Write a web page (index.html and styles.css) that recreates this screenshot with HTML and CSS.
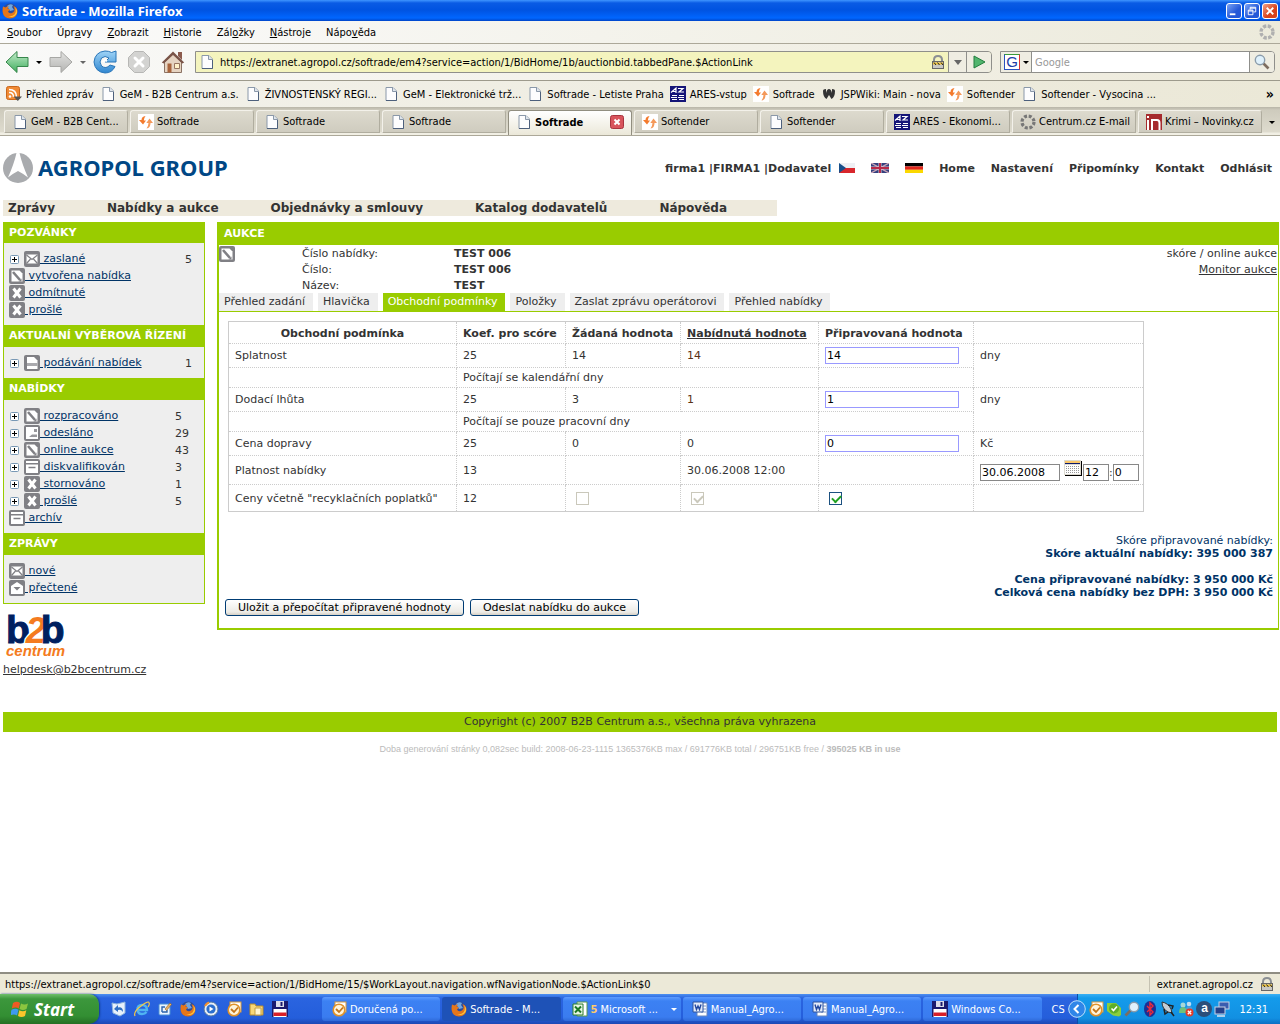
FILE: index.html
```html
<!DOCTYPE html>
<html lang="cs">
<head>
<meta charset="utf-8">
<title>Softrade - Mozilla Firefox</title>
<link rel="stylesheet" href="styles.css">
</head>
<body>
<svg class="sprite" aria-hidden="true">
  <defs>
    <linearGradient id="gGreen" x1="0" y1="0" x2="0" y2="1"><stop offset="0" stop-color="#c5eccb"/><stop offset="1" stop-color="#3fae5e"/></linearGradient>
    <linearGradient id="gGray" x1="0" y1="0" x2="0" y2="1"><stop offset="0" stop-color="#e2e2e0"/><stop offset="1" stop-color="#b4b4b2"/></linearGradient>
    <linearGradient id="gBlue" x1="0" y1="0" x2="0" y2="1"><stop offset="0" stop-color="#9fd4f7"/><stop offset="1" stop-color="#2f86d0"/></linearGradient>
  </defs>
  <symbol id="firefox" viewBox="0 0 16 16"><circle cx="8" cy="8" r="7.4" fill="#2c4c9c"/><path d="M5 3q3-3 6-1l-1 2 2 3-4 1z" fill="#6fa6e0"/><path d="M1 3.500L3.600 4.500Q5 3 7 3.500L5.500 5.500 8 6.500 6 8.500Q7 11 10 10 13 8.500 12.500 5.500L11.500 3Q15.700 4.500 15.500 9 14.600 15 8 15.600 1.500 15 .6 9 .3 6 1 3.500z" fill="#e5761a"/><path d="M13 4q2 4-.5 7.500Q10 14 6 13q6 3 9-3 .8-3-2-6z" fill="#fbc33c"/></symbol>
  <symbol id="page" viewBox="0 0 16 16"><path d="M3 1.500h7L13.500 5v9.500H3z" fill="#fdfdfe" stroke="#8a98a9"/><path d="M9.500 1.500V5.500h4" fill="#dfe5ec" stroke="#8a98a9"/><path d="M3 14.500h10.500V6" fill="none" stroke="#4d607c"/></symbol>
  <symbol id="swirl" viewBox="0 0 16 16"><path fill="#fff" d="M0 0h16v16H0z"/><path d="M7.500 2Q3.500 2.500 3.500 6H1l4 4.500L8 6.500H5.800Q6 4 7.500 2z" fill="#f47a2c"/><path d="M8.500 14.500q4-.5 4-5.500H15L11.500 4.500 8.300 9H10.500Q10.300 12.500 8.500 14.500z" fill="#f4995a"/></symbol>
  <symbol id="ares" viewBox="0 0 16 16"><path fill="#151578" d="M0 0h16v16H0z"/><path d="M1 6.500L6 2v5M2 5.500h4M8 2.500h5L9 6h5M2 9.500h5M2 13.500h5M9 9.500h5M9 13.500h5M1 11.500h6M8 11.500h6" fill="none" stroke="#fff" stroke-width="1.200"/></symbol>
  <symbol id="rss" viewBox="0 0 16 16"><rect x=".5" y=".5" width="13" height="13" rx="2" fill="#f08a34" stroke="#c9671b"/><circle cx="4" cy="10.500" r="1.300" fill="#fff"/><path d="M3 6.500q4.500 0 4.500 4.500M3 3.500q7.500 0 7.500 7.500" fill="none" stroke="#fff" stroke-width="1.500"/><path d="M7.500 10.500h8.500l-4.200 4.500z" fill="#555"/></symbol>
  <symbol id="wiki" viewBox="0 0 16 16"><path d="M2 5q0-2 3-2v4q1-4 3-4t3 4V3q3 0 3 2 0 6-3.500 8L8 9l-2.500 4Q2 11 2 5z" fill="#333"/></symbol>
  <symbol id="throb" viewBox="0 0 16 16"><circle cx="8" cy="8" r="6" fill="none" stroke="#b0b0b0" stroke-width="3.400" stroke-dasharray="3.300 1.410"/></symbol>
  <symbol id="throb2" viewBox="0 0 16 16"><circle cx="8" cy="8" r="6" fill="none" stroke="#777" stroke-width="3.200" stroke-dasharray="3 1.710"/></symbol>
  <symbol id="novinky" viewBox="0 0 16 16"><path fill="#a62b2e" d="M0 0h16v16H0z"/><path d="M2 4V2M2 16V6M6 16V6h5q2.500 0 2.500 3v7" fill="none" stroke="#fff" stroke-width="2"/></symbol>
  <symbol id="back" viewBox="0 0 24 24"><path d="M1 12L12 1.500V7.500H23V16.500H12V22.500z" fill="url(#gGreen)" stroke="#36864b"/></symbol>
  <symbol id="fwd" viewBox="0 0 24 24"><path d="M23 12L12 1.500V7.500H1V16.500H12V22.500z" fill="url(#gGray)" stroke="#a7a7a4"/></symbol>
  <symbol id="reload" viewBox="0 0 24 24"><path d="M18.500 2.500L23 1v11H12l4-4Q12 5 8.500 8 5.500 12 8.500 16q4.500 3.500 8.500-1l5 1.500Q19 23 12 23 2 22 1 12 2 2 12 1q4 0 6.500 1.500z" fill="url(#gBlue)" stroke="#2774b8"/><path d="M14 11q-3-1.500-4 1" fill="none" stroke="#fff" stroke-width="2"/></symbol>
  <symbol id="stop" viewBox="0 0 24 24"><path d="M7.500 1.500h9l6 6v9l-6 6h-9l-6-6v-9z" fill="#d3d3d1" stroke="#b7b7b5"/><path d="M8 8l8 8M16 8l-8 8" stroke="#fff" stroke-width="3" stroke-linecap="round"/></symbol>
  <symbol id="home" viewBox="0 0 24 24"><path d="M17 2h4v8l-4-4z" fill="#8b5a4c"/><path d="M3.500 12L12 4l8.500 8v10.500h-17z" fill="#e6d4c2" stroke="#8a7264"/><path d="M.8 12.500L12 1.500l11.200 11-2 1L12 5 2.800 13.500z" fill="#795347"/><path d="M6.500 13.500h4v9h-4z" fill="#a8643c"/><path d="M13.500 13.500h5v5h-5z" fill="#fff1c9" stroke="#987560"/></symbol>
  <symbol id="lock" viewBox="0 0 16 16"><path d="M4 9V6q0-4 4-4t4 4v3" fill="none" stroke="#8b8f94" stroke-width="2"/><rect x="2.500" y="7.500" width="11" height="7" fill="#c8c8c4" stroke="#666"/><path d="M3 9.500h10" stroke="#f2c331" stroke-width="2"/><path d="M4 8.500l2 2.500M7.500 8.500l2 2.500M11 8.500l2 2.500" stroke="#222"/></symbol>
  <symbol id="go" viewBox="0 0 16 16"><path d="M3 2l11 6L3 14z" fill="#52b56e" stroke="#237d3e"/></symbol>
  <symbol id="mag" viewBox="0 0 16 16"><path d="M9.500 9.500l5 5" stroke="#7d6d60" stroke-width="2.600"/><circle cx="6" cy="6" r="4.700" fill="#dff1fc" stroke="#8a9cab" stroke-width="1.400"/></symbol>
  <symbol id="pen" viewBox="0 0 16 16"><rect width="16" height="16" rx="2" fill="#808085"/><path d="M2.500 2.500h8l3 3v8h-11z" fill="#fff"/><path d="M4 4L11 12" stroke="#808085" stroke-width="2.600"/><path d="M12.500 10.500v3h-3z" fill="#808085"/></symbol>
  <symbol id="mail" viewBox="0 0 16 16"><rect width="16" height="16" rx="2" fill="#808085"/><rect x="2.500" y="3.500" width="11" height="9" fill="#fff"/><path d="M2.500 4l5.500 4.500L13.500 4M2.500 12.500l4-4.500M13.500 12.500l-4-4.500" fill="none" stroke="#808085" stroke-width="1.200"/></symbol>
  <symbol id="cross" viewBox="0 0 16 16"><rect width="16" height="16" rx="2" fill="#808085"/><path d="M4.500 3.500l7 9M11.500 3.500l-7 9" stroke="#fff" stroke-width="3"/></symbol>
  <symbol id="doc" viewBox="0 0 16 16"><rect width="16" height="16" rx="2" fill="#808085"/><path d="M3 2h7l3.500 3.500V14H3z" fill="#fff"/><path d="M3 8h10.500v3H3z" fill="#aaaaae"/></symbol>
  <symbol id="sent" viewBox="0 0 16 16"><rect width="16" height="16" rx="2" fill="#808085"/><path d="M2 2h12v12H2z" fill="#fff"/><path d="M10 4h3v3h-3zM5 12l3-2.500h5V12z" fill="#98989c"/></symbol>
  <symbol id="box" viewBox="0 0 16 16"><rect width="16" height="16" rx="2" fill="#808085"/><path d="M2 2h12v2H2zM2 5.500h12V14H2z" fill="#fff"/><path d="M4.500 8.500h7" stroke="#808085" stroke-width="1.500"/></symbol>
  <symbol id="open" viewBox="0 0 16 16"><rect width="16" height="16" rx="2" fill="#808085"/><path d="M2 6l6-4 6 4v8H2z" fill="#fff"/><path d="M4.500 7h7L8 10.500z" fill="#808085"/></symbol>
  <symbol id="plus" viewBox="0 0 9 9"><rect x=".5" y=".5" width="8" height="8" rx="1" fill="#fff" stroke="#7898b5"/><path d="M2 4.500h5M4.500 2v5" stroke="#000"/></symbol>
  <symbol id="outlook" viewBox="0 0 16 16"><rect x="4" y="1" width="11" height="10" fill="#fff" stroke="#d99b3c"/><circle cx="8" cy="9" r="5.800" fill="#fff4da" stroke="#e0922a" stroke-width="1.600"/><path d="M5 8l3 3 4-4.500" fill="none" stroke="#c4761a" stroke-width="1.800"/></symbol>
  <symbol id="ie" viewBox="0 0 16 16"><path d="M3.500 9h9.500Q13 4 8 4T3.500 9q.5 4 4.500 4 3 0 4.500-2" fill="none" stroke="#4fb4f2" stroke-width="2.400"/><path d="M1 15Q-1 11 7 5T15 2q1 1-1 4" fill="none" stroke="#f5c945" stroke-width="1.200"/></symbol>
  <symbol id="sync" viewBox="0 0 16 16"><path d="M1 2l5 1 8-2v11l-5 3-7-3z" fill="#e7f1fb" stroke="#8fb5dc"/><path d="M3 8l4-4v2.500q5-1 5 4.500-2-3-5-2V11z" fill="#2f6fc4"/></symbol>
  <symbol id="desk" viewBox="0 0 16 16"><rect x="2" y="3" width="11" height="11" rx="1" fill="#e9f4ff" stroke="#4a8fd4"/><path d="M5 11V6h3M5 11h5V9" fill="none" stroke="#2a62ac" stroke-width="1.400"/><path d="M8 8l5-6 1.500 1.500-5 6z" fill="#e7b36c" stroke="#8b5a20" stroke-width=".6"/></symbol>
  <symbol id="wmp" viewBox="0 0 16 16"><circle cx="8" cy="8" r="7" fill="#e8eef6" stroke="#54779f"/><circle cx="8" cy="8" r="4.600" fill="#2c6fce"/><path d="M6.500 5.500v5l4-2.500z" fill="#fff"/><path d="M2 5a7 7 0 0 1 4-3.500" stroke="#ef9130" stroke-width="2" fill="none"/></symbol>
  <symbol id="folder" viewBox="0 0 16 16"><path d="M1 3h5l1 2h7v9H1z" fill="#f8d878" stroke="#b98c2a"/><path d="M6 7h6v7H6z" fill="#fff6d2" stroke="#c39f48"/></symbol>
  <symbol id="floppy" viewBox="0 0 16 16"><path d="M0 0h16v16H0z" fill="#1a1a6e"/><path d="M4 0h8v6H4z" fill="#dcdce8"/><path d="M8.500 1h2v4h-2z" fill="#1a1a6e"/><path d="M1.500 8h13v8h-13z" fill="#fff"/><path d="M1.500 11.500h13v3.500h-13z" fill="#d8202a"/></symbol>
  <symbol id="excel" viewBox="0 0 16 16"><path d="M5 1h10v14H5z" fill="#fff" stroke="#5b9a4c"/><path d="M1 3h10v11H1z" fill="#e9f6e5" stroke="#2c7d2c"/><path d="M3 5.500l6 6M9 5.500l-6 6" stroke="#1f7a25" stroke-width="2"/></symbol>
  <symbol id="word" viewBox="0 0 16 16"><path d="M5 2h10v13H5z" fill="#fff" stroke="#6685bd"/><path d="M9 5h5M9 8h5M9 11h5" stroke="#7d97c8"/><path d="M1 1h10v10H1z" fill="#e3ebf9" stroke="#2d539e"/><path d="M3 3.500l1.500 5L6 5l1.500 3.500L9 3.500" fill="none" stroke="#2449a0" stroke-width="1.400"/></symbol>
  <symbol id="winflag" viewBox="0 0 18 18"><path d="M2 3q4-2.500 7 0L7.800 8.500q-3-2-7 0z" fill="#ee5a24"/><path d="M10 3.500q3.500 2 7 0L15.500 9q-3.500 2-7 0z" fill="#8cc63f"/><path d="M.5 9.800q4-2 7 0L6 15.500q-3-2-7 0z" fill="#3f9af0"/><path d="M8.300 10.300q3.500 2 7 0L14 16q-3.500 2-7 0z" fill="#fdc52b"/></symbol>
  <symbol id="skype" viewBox="0 0 16 16"><path d="M1 2h9l5 5v7l-2 1.500-6-1L1 10z" fill="#8bcf3c"/><circle cx="8" cy="7.500" r="5" fill="#5eae2a"/><path d="M5.500 7.500l2 2 3.500-4" fill="none" stroke="#fff" stroke-width="1.600"/></symbol>
  <symbol id="bt" viewBox="0 0 16 16"><ellipse cx="8" cy="8" rx="6" ry="8" fill="#1b2f94"/><path d="M5 5l6 6-3 3V2l3 3-6 6" fill="none" stroke="#f02a38" stroke-width="1.400"/></symbol>
  <symbol id="rocket" viewBox="0 0 16 16"><path d="M2 1q6 1 9 7l1 4-4-1Q2 8 2 1z" fill="#c6cdd4" stroke="#333"/><path d="M4 8l1 5 3-2M8 4l5 1-1 3M11 11l3 4" fill="none" stroke="#222" stroke-width="1.500"/></symbol>
  <symbol id="users" viewBox="0 0 16 16"><circle cx="5" cy="4" r="2.500" fill="#a7d7d8"/><path d="M1 12q0-6 4-6t4 6z" fill="#6fc27c"/><circle cx="11" cy="3" r="2.300" fill="#bfdcf3"/><path d="M8 9q0-4 3-4t3.500 4z" fill="#4e9fd8"/><circle cx="11.500" cy="11.500" r="4" fill="#e23b28"/><path d="M9.800 9.800l3.400 3.400M13.200 9.800l-3.400 3.400" stroke="#fff" stroke-width="1.300"/></symbol>
  <symbol id="net" viewBox="0 0 16 16"><rect x="5" y="1" width="10" height="7" fill="#3a5db0" stroke="#c9d2e4"/><rect x="1" y="6" width="10" height="7" fill="#24408a" stroke="#c9d2e4"/><path d="M3 15h8" stroke="#dfe4ef" stroke-width="1.500"/></symbol>
</svg>

<div class="window">
  <header class="titlebar">
    <svg class="i16"><use href="#firefox"/></svg>
    <h1 class="titlebar-text">Softrade - Mozilla Firefox</h1>
    <button class="winbtn" aria-label="Minimalizovat"><svg viewBox="0 0 15 15"><path d="M3 10h6v2H3z" fill="#fff"/></svg></button>
    <button class="winbtn" aria-label="Obnovit"><svg viewBox="0 0 15 15"><path d="M5.500 6V3.500h6v5H9M5.500 4.500h6M3.500 6.500h5v5h-5zM3.500 7.500h5" fill="none" stroke="#fff"/></svg></button>
    <button class="winbtn winbtn-close" aria-label="Zavřít"><svg viewBox="0 0 15 15"><path d="M4 4l7 7M11 4l-7 7" stroke="#fff" stroke-width="2"/></svg></button>
  </header>

  <nav class="menubar">
    <button><u>S</u>oubor</button><button>Úpr<u>a</u>vy</button><button><u>Z</u>obrazit</button><button><u>H</u>istorie</button><button>Zál<u>o</u>žky</button><button><u>N</u>ástroje</button><button>Nápo<u>v</u>ěda</button>
    <svg class="i16 push"><use href="#throb"/></svg>
  </nav>

  <div class="navbar">
    <button class="tool" aria-label="Zpět"><svg class="i24"><use href="#back"/></svg></button>
    <button class="caret-btn" aria-label="Historie zpět"><span class="caret"></span></button>
    <button class="tool" aria-label="Vpřed"><svg class="i24"><use href="#fwd"/></svg></button>
    <button class="caret-btn" aria-label="Historie vpřed"><span class="caret caret-dim"></span></button>
    <button class="tool" aria-label="Obnovit stránku"><svg class="i24"><use href="#reload"/></svg></button>
    <button class="tool" aria-label="Zastavit"><svg class="i24"><use href="#stop"/></svg></button>
    <button class="tool" aria-label="Domů"><svg class="i24"><use href="#home"/></svg></button>
    <div class="urlbar">
      <svg class="i16"><use href="#page"/></svg>
      <input type="text" aria-label="Adresa" value="https://extranet.agropol.cz/softrade/em4?service=action/1/BidHome/1b/auctionbid.tabbedPane.$ActionLink">
      <svg class="i16"><use href="#lock"/></svg>
      <button class="bar-btn bar-drop" aria-label="Seznam adres"><span class="caret caret-dim caret-big"></span></button>
      <button class="bar-btn" aria-label="Přejít"><svg class="i16"><use href="#go"/></svg></button>
    </div>
    <div class="searchbar">
      <button class="engine" aria-label="Vyhledávač Google"><span class="g-mark">G</span><span class="caret"></span></button>
      <input type="text" aria-label="Hledat" placeholder="Google">
      <button class="bar-btn" aria-label="Hledat"><svg class="i16"><use href="#mag"/></svg></button>
    </div>
  </div>

  <nav class="bookmarks">
    <a href="#"><svg class="i16"><use href="#rss"/></svg>Přehled zpráv</a>
    <a href="#"><svg class="i16"><use href="#page"/></svg>GeM - B2B Centrum a.s.</a>
    <a href="#"><svg class="i16"><use href="#page"/></svg>ŽIVNOSTENSKÝ REGI...</a>
    <a href="#"><svg class="i16"><use href="#page"/></svg>GeM - Elektronické trž...</a>
    <a href="#"><svg class="i16"><use href="#page"/></svg>Softrade - Letiste Praha</a>
    <a href="#"><svg class="i16"><use href="#ares"/></svg>ARES-vstup</a>
    <a href="#"><svg class="i16"><use href="#swirl"/></svg>Softrade</a>
    <a href="#"><svg class="i16"><use href="#wiki"/></svg>JSPWiki: Main - nova</a>
    <a href="#"><svg class="i16"><use href="#swirl"/></svg>Softender</a>
    <a href="#"><svg class="i16"><use href="#page"/></svg>Softender - Vysocina ...</a>
    <button class="more push" aria-label="Další záložky">»</button>
  </nav>

  <div class="tabstrip">
    <button class="tab"><svg class="i16"><use href="#page"/></svg>GeM - B2B Cent...</button>
    <button class="tab"><svg class="i16"><use href="#swirl"/></svg>Softrade</button>
    <button class="tab"><svg class="i16"><use href="#page"/></svg>Softrade</button>
    <button class="tab"><svg class="i16"><use href="#page"/></svg>Softrade</button>
    <button class="tab tab-active"><svg class="i16"><use href="#page"/></svg>Softrade<svg class="tab-close" viewBox="0 0 14 14"><rect x=".5" y=".5" width="13" height="13" rx="2" fill="#d8545c" stroke="#a9343f"/><path d="M4.500 4.500l5 5M9.500 4.500l-5 5" stroke="#fff" stroke-width="2"/></svg></button>
    <button class="tab"><svg class="i16"><use href="#swirl"/></svg>Softender</button>
    <button class="tab"><svg class="i16"><use href="#page"/></svg>Softender</button>
    <button class="tab"><svg class="i16"><use href="#ares"/></svg>ARES - Ekonomi...</button>
    <button class="tab"><svg class="i16"><use href="#throb2"/></svg>Centrum.cz E-mail</button>
    <button class="tab"><svg class="i16"><use href="#novinky"/></svg>Krimi – Novinky.cz</button>
    <button class="tab-list" aria-label="Seznam panelů"><span class="caret"></span></button>
  </div>

  <main class="page">
    <div class="page-head">
      <a class="brand" href="#">
        <svg class="brand-mark" viewBox="0 0 30 30"><circle cx="15" cy="15" r="15" fill="#a9abae"/><path d="M13.500 0Q11 11 5 24.500 10 20.500 15 18 20 20.500 25 24.500 19 11 16.500 0z" fill="#fff"/></svg>
        <span class="brand-name">AGROPOL GROUP</span>
      </a>
      <nav class="user-nav">
        <span class="who">firma1 |FIRMA1 |Dodavatel</span>
        <a href="#" aria-label="Čeština"><svg class="flag-cz" viewBox="0 0 16 10"><path fill="#eef0f4" d="M0 0h16v5H0z"/><path fill="#d8262c" d="M0 5h16v5H0z"/><path fill="#174f8a" d="M0 0l7 5-7 5z"/></svg></a>
        <a href="#" aria-label="English"><svg class="flag" viewBox="0 0 18 10"><path fill="#33407f" d="M0 0h18v10H0z"/><path d="M0 0l18 10M18 0L0 10" stroke="#c9a3b5" stroke-width="1.400"/><path d="M9 0v10M0 5h18" stroke="#d9c8d4" stroke-width="3"/><path d="M9 0v10M0 5h18" stroke="#b82a48" stroke-width="2"/></svg></a>
        <a href="#" aria-label="Deutsch"><svg class="flag" viewBox="0 0 18 10"><path d="M0 0h18v3.400H0z"/><path fill="#e0261c" d="M0 3.400h18v3.400H0z"/><path fill="#fbd800" d="M0 6.800h18V10H0z"/></svg></a>
        <a href="#">Home</a><a href="#">Nastavení</a><a href="#">Připomínky</a><a href="#">Kontakt</a><a href="#">Odhlásit</a>
      </nav>
    </div>

    <nav class="site-menu">
      <a href="#">Zprávy</a><a href="#">Nabídky a aukce</a><a href="#">Objednávky a smlouvy</a><a href="#">Katalog dodavatelů</a><a href="#">Nápověda</a>
    </nav>

    <div class="columns">
      <aside class="side">
        <div class="side-box">
          <h2>POZVÁNKY</h2>
          <ul>
            <li><svg class="plus"><use href="#plus"/></svg><a href="#"><svg class="i16"><use href="#mail"/></svg>&nbsp;zaslané</a><span class="count">5</span></li>
            <li><a href="#"><svg class="i16"><use href="#pen"/></svg>&nbsp;vytvořena nabídka</a></li>
            <li><a href="#"><svg class="i16"><use href="#cross"/></svg>&nbsp;odmítnuté</a></li>
            <li><a href="#"><svg class="i16"><use href="#cross"/></svg>&nbsp;prošlé</a></li>
          </ul>
          <h2>AKTUALNÍ VÝBĚROVÁ ŘÍZENÍ</h2>
          <ul>
            <li><svg class="plus"><use href="#plus"/></svg><a href="#"><svg class="i16"><use href="#doc"/></svg>&nbsp;podávání nabídek</a><span class="count">1</span></li>
          </ul>
          <h2>NABÍDKY</h2>
          <ul class="wide-counts">
            <li><svg class="plus"><use href="#plus"/></svg><a href="#"><svg class="i16"><use href="#pen"/></svg>&nbsp;rozpracováno</a><span class="count">5</span></li>
            <li><svg class="plus"><use href="#plus"/></svg><a href="#"><svg class="i16"><use href="#sent"/></svg>&nbsp;odesláno</a><span class="count">29</span></li>
            <li><svg class="plus"><use href="#plus"/></svg><a href="#"><svg class="i16"><use href="#pen"/></svg>&nbsp;online aukce</a><span class="count">43</span></li>
            <li><svg class="plus"><use href="#plus"/></svg><a href="#"><svg class="i16"><use href="#box"/></svg>&nbsp;diskvalifikován</a><span class="count">3</span></li>
            <li><svg class="plus"><use href="#plus"/></svg><a href="#"><svg class="i16"><use href="#cross"/></svg>&nbsp;stornováno</a><span class="count">1</span></li>
            <li><svg class="plus"><use href="#plus"/></svg><a href="#"><svg class="i16"><use href="#cross"/></svg>&nbsp;prošlé</a><span class="count">5</span></li>
            <li><a href="#"><svg class="i16"><use href="#box"/></svg>&nbsp;archív</a></li>
          </ul>
          <h2>ZPRÁVY</h2>
          <ul>
            <li><a href="#"><svg class="i16"><use href="#mail"/></svg>&nbsp;nové</a></li>
            <li><a href="#"><svg class="i16"><use href="#open"/></svg>&nbsp;přečtené</a></li>
          </ul>
        </div>
        <svg class="b2b" viewBox="0 0 62 48" role="img" aria-label="b2b centrum">
          <text x="1" y="32" class="b2b-b">b<tspan class="b2b-2" dx="-4">2</tspan><tspan dx="-5">b</tspan></text>
          <text x="1" y="45" class="b2b-c">centrum</text>
        </svg>
        <a class="helpdesk" href="#">helpdesk@b2bcentrum.cz</a>
      </aside>

      <section class="auction">
        <h2>AUKCE</h2>
        <div class="info">
          <svg class="i16"><use href="#pen"/></svg>
          <dl>
            <dt>Číslo nabídky:</dt><dd>TEST 006</dd>
            <dt>Číslo:</dt><dd>TEST 006</dd>
            <dt>Název:</dt><dd>TEST</dd>
          </dl>
          <div class="info-right"><span>skóre / online aukce</span><a href="#">Monitor aukce</a></div>
        </div>
        <nav class="subtabs">
          <a href="#">Přehled zadání</a><a href="#">Hlavička</a><a href="#" class="on">Obchodní podmínky</a><a href="#">Položky</a><a href="#">Zaslat zprávu operátorovi</a><a href="#">Přehled nabídky</a>
        </nav>
        <form class="panel">
          <table class="terms">
            <colgroup><col class="c-name"><col class="c-koef"><col class="c-want"><col class="c-offer"><col class="c-prep"><col class="c-unit"></colgroup>
            <thead>
              <tr><th>Obchodní podmínka</th><th>Koef. pro scóre</th><th>Žádaná hodnota</th><th><a href="#">Nabídnutá hodnota</a></th><th>Připravovaná hodnota</th><th></th></tr>
            </thead>
            <tbody>
              <tr class="r-input"><td><label for="splatnost">Splatnost</label></td><td>25</td><td>14</td><td class="own">14</td><td class="field"><input id="splatnost" type="text" value="14"></td><td rowspan="2" class="unit">dny</td></tr>
              <tr class="r-note"><td></td><td colspan="3">Počítají se kalendářní dny</td><td></td></tr>
              <tr class="r-input"><td><label for="lhuta">Dodací lhůta</label></td><td>25</td><td>3</td><td class="own">1</td><td class="field"><input id="lhuta" type="text" value="1"></td><td rowspan="2" class="unit">dny</td></tr>
              <tr class="r-note"><td></td><td colspan="3">Počítají se pouze pracovní dny</td><td></td></tr>
              <tr class="r-input"><td><label for="doprava">Cena dopravy</label></td><td>25</td><td>0</td><td>0</td><td class="field"><input id="doprava" type="text" value="0"></td><td class="unit">Kč</td></tr>
              <tr class="r-date"><td><label for="platnost">Platnost nabídky</label></td><td>13</td><td></td><td>30.06.2008 12:00</td><td></td>
                <td><div class="date-row"><input id="platnost" class="date" type="text" value="30.06.2008"><button type="button" class="cal" aria-label="Kalendář"><svg viewBox="0 0 18 16"><path fill="#000" d="M1 1h17v15H1z"/><path fill="#dddad0" d="M0 0h17v15H0z"/><path fill="#fbc86a" d="M1 1h15v2H1z"/><path fill="#0a1a6e" d="M1 3h15v1H1z"/><path fill="#fff" d="M1 5h15v9H1z"/><path d="M2 6.500h13M2 8.500h13M2 10.500h13M2 12.500h13" stroke="#999" stroke-dasharray="1 1"/></svg></button><input class="num" type="text" aria-label="Hodina" value="12">:<input class="num" type="text" aria-label="Minuta" value="0"></div></td></tr>
              <tr class="r-check"><td><label for="poplatky">Ceny včetně "recyklačních poplatků"</label></td><td>12</td><td><input type="checkbox" aria-label="Žádaná hodnota" disabled></td><td><input type="checkbox" aria-label="Nabídnutá hodnota" checked disabled></td><td><input id="poplatky" type="checkbox" checked></td><td></td></tr>
            </tbody>
          </table>
          <div class="summary">
            <p>Skóre připravované nabídky:</p>
            <p><b>Skóre aktuální nabídky: 395 000 387</b></p>
            <p>&nbsp;</p>
            <p><b>Cena připravované nabídky: 3 950 000 Kč</b></p>
            <p><b>Celková cena nabídky bez DPH: 3 950 000 Kč</b></p>
          </div>
          <div class="actions">
            <button type="button">Uložit a přepočítat připravené hodnoty</button>
            <button type="button">Odeslat nabídku do aukce</button>
          </div>
        </form>
      </section>
    </div>

    <footer class="site-foot">
      <p class="copyright">Copyright (c) 2007 B2B Centrum a.s., všechna práva vyhrazena</p>
      <p class="gen">Doba generování stránky 0,082sec build: 2008-06-23-1115 1365376KB max / 691776KB total / 296751KB free / <b>395025 KB in use</b></p>
    </footer>
  </main>

  <div class="statusbar">
    <span class="status-url">https://extranet.agropol.cz/softrade/em4?service=action/1/BidHome/15/$WorkLayout.navigation.wfNavigationNode.$ActionLink$0</span>
    <span class="status-host">extranet.agropol.cz<svg class="i16"><use href="#lock"/></svg></span>
  </div>

  <div class="taskbar">
    <button class="start"><svg viewBox="0 0 18 18"><use href="#winflag"/></svg>Start</button>
    <div class="quick">
      <svg class="i16"><use href="#sync"/></svg><svg class="i16"><use href="#ie"/></svg><svg class="i16"><use href="#desk"/></svg><svg class="i16"><use href="#firefox"/></svg><svg class="i16"><use href="#wmp"/></svg><svg class="i16"><use href="#outlook"/></svg><svg class="i16"><use href="#folder"/></svg><svg class="i16"><use href="#floppy"/></svg>
    </div>
    <div class="tasks">
      <button><svg class="i16"><use href="#outlook"/></svg>Doručená po...</button>
      <button class="pressed"><svg class="i16"><use href="#firefox"/></svg>Softrade - M...</button>
      <button><svg class="i16"><use href="#excel"/></svg><span class="group-n">5</span>Microsoft ...<span class="caret caret-white push"></span></button>
      <button><svg class="i16"><use href="#word"/></svg>Manual_Agro...</button>
      <button><svg class="i16"><use href="#word"/></svg>Manual_Agro...</button>
      <button><svg class="i16"><use href="#floppy"/></svg>Windows Co...</button>
    </div>
    <span class="lang">CS</span>
    <div class="tray">
      <button class="tray-toggle" aria-label="Skrýt neaktivní ikony"><svg viewBox="0 0 18 18"><circle cx="9" cy="9" r="8.300" fill="#2f86e8" stroke="#bfe0fb"/><path d="M10.500 5l-4 4 4 4" fill="none" stroke="#fff" stroke-width="2"/></svg></button>
      <svg class="i16"><use href="#outlook"/></svg><svg class="i16"><use href="#skype"/></svg><svg class="i16 flip"><use href="#mag"/></svg><svg class="i16"><use href="#bt"/></svg><svg class="i16"><use href="#rocket"/></svg><svg class="i16"><use href="#users"/></svg><span class="ava">a</span><svg class="i16"><use href="#net"/></svg>
      <time class="clock">12:31</time>
    </div>
  </div>
</div>
</body>
</html>
```
FILE: styles.css
```css
* { box-sizing: border-box; }

body {
  margin: 0;
  font-family: "DejaVu Sans", Verdana, sans-serif;
  font-size: 11px;
  color: #333;
  background: #fff;
}

button, input { font: inherit; color: inherit; margin: 0; }
button { background: none; border: 0; padding: 0; }
input { padding: 0; }
h1, h2, p, ul, dl, dd { margin: 0; padding: 0; }
ul { list-style: none; }
svg { display: block; flex: none; }

.sprite { position: absolute; width: 0; height: 0; }
.i16 { width: 16px; height: 16px; }
.i24 { width: 24px; height: 24px; }
.push { margin-left: auto; }
.flip { transform: scaleX(-1); }

.caret {
  display: block;
  width: 0;
  height: 0;
  border: 3px solid transparent;
  border-top-color: #000;
  border-bottom-width: 0;
}
.caret-dim { border-top-color: #666; }
.caret-big { border-width: 5px 4px 0; }
.caret-white { border-top-color: #fff; }

.window {
  display: flex;
  flex-direction: column;
  min-height: 100vh;
}

.titlebar, .menubar, .navbar, .bookmarks, .tabstrip, .statusbar, .taskbar {
  display: flex;
  align-items: center;
  color: #000;
  font-family: "DejaVu Sans Condensed", Tahoma, sans-serif;
  font-size: 11px;
  white-space: nowrap;
}

/* Title bar */
.titlebar {
  height: 21px;
  padding: 0 2px;
  gap: 2px;
  color: #fff;
  background: linear-gradient(#3f95ff 0, #0a5be4 3px, #0053e1 10px, #0066ff 18px, #0045c8 21px);
}
.titlebar-text {
  flex: 1;
  padding-left: 2px;
  font: bold 13px "Noto Sans", sans-serif;
  line-height: 18px;
}
.winbtn {
  width: 16px;
  height: 16px;
  border: 1px solid #fff;
  border-radius: 3px;
  background: linear-gradient(135deg, #7aa3f5, #2458d8 60%);
}
.winbtn-close { background: linear-gradient(135deg, #f0a088, #d8431c 60%); }

/* Toolbars */
.menubar {
  height: 23px;
  padding: 0 5px 0 7px;
  gap: 15px;
  background: linear-gradient(90deg, #fbfbfb, #eceadb);
  border-bottom: 1px solid #aca899;
}
.navbar {
  height: 37px;
  padding: 0 5px;
  background: linear-gradient(90deg, #f9f9f8, #edeadb);
  border-bottom: 1px solid #9d9a8c;
}
.tool { margin-right: 10px; }
.tool + .caret-btn { margin: 0 6px 0 -3px; }
.caret-btn { display: flex; align-items: center; width: 7px; height: 24px; }
.urlbar, .searchbar {
  display: flex;
  align-items: stretch;
  height: 22px;
  border: 1px solid #8f8f8b;
  border-radius: 0 4px 4px 0;
}
.urlbar { flex: 1; background: #f4f4be; }
.urlbar > svg { margin: 2px 2px 0 3px; }
.urlbar input, .searchbar input {
  flex: 1;
  min-width: 0;
  border: 0;
  outline: 0;
  background: none;
}
.urlbar input { padding-left: 3px; }
.bar-btn {
  display: flex;
  align-items: center;
  justify-content: center;
  width: 25px;
  border-left: 1px solid #8f8f8b;
  background: #efede2;
  border-radius: 0 3px 3px 0;
}
.bar-drop { width: 18px; border-radius: 0; }
.searchbar { width: 275px; margin-left: 8px; background: #fff; }
.engine {
  display: flex;
  align-items: center;
  gap: 3px;
  width: 31px;
  padding-left: 3px;
  background: #efede2;
  border-right: 1px solid #8f8f8b;
}
.g-mark {
  width: 16px;
  height: 16px;
  border: 1px solid;
  border-color: #3a9b3a #d33 #2a50c0 #2a50c0;
  background: #fff;
  color: #1c3da8;
  font: 15px "Liberation Sans", sans-serif;
  line-height: 14px;
}
.searchbar input { padding-left: 3px; }
.searchbar input::placeholder { color: #999; opacity: 1; }

.bookmarks {
  height: 26px;
  padding: 0 6px;
  gap: 6px;
  background: linear-gradient(90deg, #f3f2ec, #ebe8d7);
}
.bookmarks a {
  display: flex;
  align-items: center;
  gap: 4px;
  color: #000;
  text-decoration: none;
}
.more { font-size: 14px; font-weight: bold; }

.tabstrip {
  height: 29px;
  padding: 3px 0 0 4px;
  gap: 2px;
  align-items: stretch;
  background: linear-gradient(#b8b5a8, #cecbbd 3px, #dedbce 25px, #f1efe4 26px);
  border-bottom: 1px solid #aca899;
}
.tab {
  flex: 1;
  min-width: 0;
  display: flex;
  align-items: center;
  gap: 3px;
  padding: 0 7px;
  margin-bottom: 2px;
  border: 1px solid #b0ad9f;
  border-top-color: #f3f1ea;
  border-left-color: #f3f1ea;
  border-radius: 3px 3px 0 0;
  background: linear-gradient(#dddace, #cfccbf);
}
.tab-active {
  font-weight: bold;
  padding-bottom: 2px;
  margin-bottom: 0;
  border-color: #918e80;
  border-bottom: 0;
  background: linear-gradient(#fff, #ebe8d9);
}
.tab-close { width: 14px; height: 14px; margin-left: auto; }
.tab-list {
  width: 16px;
  display: flex;
  align-items: center;
  justify-content: center;
}

/* Page */
.page { flex: 1; padding: 0 1px 0 3px; }
.page-head {
  display: flex;
  justify-content: space-between;
  align-items: center;
  height: 64px;
  padding-right: 7px;
}
.brand {
  display: flex;
  align-items: center;
  gap: 5px;
  color: #004785;
  font: bold 22px "Noto Sans", sans-serif;
  text-decoration: none;
}
.brand-mark { width: 30px; height: 30px; }
.brand-name { padding-bottom: 3px; }
.user-nav { display: flex; align-items: center; gap: 16px; font-weight: bold; }
.user-nav a { color: #333; text-decoration: none; }
.user-nav .who { margin-right: -8px; }
.flag-cz { width: 16px; height: 10px; }
.flag { width: 18px; height: 10px; }

.site-menu {
  display: flex;
  gap: 52px;
  width: max-content;
  padding: 0 50px 0 5px;
  background: #eeeadd;
  font-size: 12px;
  font-weight: bold;
  line-height: 16px;
}
.site-menu a { color: #333; text-decoration: none; }

.columns { display: flex; align-items: flex-start; gap: 12px; margin-top: 6px; }

/* Side navigation */
.side { width: 202px; flex: none; }
.side-box { border: 1px solid #9c0; border-top: 0; background: #eee; }
.side-box h2 {
  padding-left: 5px;
  background: #9c0;
  color: #fff;
  font-size: 11px;
  line-height: 22px;
  white-space: nowrap;
}
.side-box h2:first-child { line-height: 21px; }
.side-box ul { padding: 7px 0 7px 5px; }
.side-box li { display: flex; align-items: center; height: 17px; }
.side-box a { display: flex; align-items: center; color: #036; line-height: 17px; text-decoration: underline; white-space: nowrap; }
.plus { width: 9px; height: 9px; margin: 2px 5px 0 1px; }
.count { margin-left: auto; width: 19px; padding-top: 2px; }
.wide-counts .count { width: 29px; }
.b2b { width: 62px; height: 48px; margin: 7px 0 3px 2px; overflow: visible; }
.b2b-b { font: bold 39px "Liberation Sans", sans-serif; fill: #00205f; stroke: #00205f; stroke-width: 1px; }
.b2b-2 { font-style: italic; font-size: 36px; fill: #f47b20; stroke: #fff; paint-order: stroke; stroke-width: 3px; }
.b2b-c { font: italic bold 15px "Liberation Sans", sans-serif; fill: #f47b20; }
.helpdesk { color: #333; line-height: 16px; }

/* Auction panel */
.auction { flex: 1; min-width: 0; border: solid #9c0; border-width: 0 1px 2px 2px; }
.auction h2 {
  padding-left: 5px;
  background: #9c0;
  color: #fff;
  font-size: 11px;
  line-height: 23px;
}
.info { display: flex; height: 48px; padding: 1px 1px 0 0; line-height: 16px; }
.info dl { flex: 1; display: grid; grid-template-columns: 152px 1fr; margin-left: 67px; }
.info dd { font-weight: bold; }
.info-right { display: flex; flex-direction: column; align-items: flex-end; }
.info-right a { color: #333; }
.subtabs { display: flex; gap: 5px; border-bottom: 1px solid #9c0; line-height: 18px; white-space: nowrap; }
.subtabs a { padding: 0 8px 0 5px; background: #eee; color: #333; text-decoration: none; }
.subtabs a.on { background: #9c0; color: #fff; }
.panel { padding: 9px 5px 12px 6px; }

.terms {
  width: 916px;
  margin-left: 3px;
  table-layout: fixed;
  border-collapse: collapse;
  border: 1px solid #ccc;
}
.c-name { width: 228px; }
.c-koef { width: 109px; }
.c-want { width: 115px; }
.c-offer { width: 138px; }
.c-prep { width: 155px; }
.terms th, .terms td {
  padding: 0 0 0 6px;
  border: 1px dotted #ccc;
  text-align: left;
  white-space: nowrap;
}
.terms th { height: 22px; padding-top: 2px; }
.terms th:first-child { padding-left: 0; text-align: center; }
.terms a { color: inherit; }
.own { color: #5a3216; }
.r-input { height: 24px; }
.r-note { height: 20px; }
.r-date { height: 29px; }
.r-check { height: 27px; }
.terms .unit { height: 24px; vertical-align: top; line-height: 23px; }
.terms input[type="text"] {
  display: block;
  width: 134px;
  height: 17px;
  border: 1px solid #99f;
  background: #fff;
  color: #000;
  padding-left: 1px;
}
.date-row { display: flex; align-items: center; padding-top: 4px; }
.terms .date-row input { border-color: #888; }
.terms .date-row .date { width: 80px; }
.terms .date-row .num { width: 26px; }
.cal { margin: 0 1px 8px 4px; }
.cal svg { width: 18px; height: 16px; }
.terms input[type="checkbox"] {
  display: block;
  appearance: none;
  width: 13px;
  height: 13px;
  margin-left: 4px;
  border: 1px solid #1c5180;
  background: #fff;
  color: #21a121;
}
.terms input[type="checkbox"]:disabled { border-color: #cac8bb; color: #cac8bb; }
.terms input[type="checkbox"]:checked::after {
  content: "";
  display: block;
  width: 7px;
  height: 4px;
  margin: 2px 0 0 2px;
  border: solid;
  border-width: 0 0 2px 2px;
  transform: rotate(-45deg);
}

.summary { margin-top: 22px; color: #036; line-height: 13px; text-align: right; }
.actions { display: flex; gap: 6px; }
.actions button {
  height: 17px;
  padding: 0 12px;
  border: 1px solid #003c74;
  border-radius: 3px;
  background: linear-gradient(#fff, #ecebe6 80%, #d6d0c5);
  color: #000;
  line-height: 15px;
}

.site-foot { margin: 34px 2px 0 0; text-align: center; }
.copyright { background: #9c0; line-height: 20px; }
.gen { margin-top: 10px; color: #bbb; font: 9px "Liberation Sans", sans-serif; line-height: 14px; }

/* Status bar */
.statusbar {
  height: 22px;
  padding: 0 5px;
  justify-content: space-between;
  background: #ece9d8;
  border-top: 2px solid #8f8d83;
}
.status-host {
  display: flex;
  align-items: center;
  gap: 6px;
  padding-left: 7px;
  border-left: 1px solid #c5c2b2;
}

/* Taskbar */
.taskbar {
  height: 30px;
  align-items: stretch;
  color: #fff;
  background: linear-gradient(#4e91f0, #2a64e0 4px, #245edb 24px, #1c48b4);
}
.start {
  display: flex;
  align-items: center;
  gap: 5px;
  width: 99px;
  padding-left: 11px;
  border-radius: 0 10px 10px 0;
  background: linear-gradient(#6fbf6a, #3c973c 5px, #338f33 22px, #246f24);
  font: italic bold 17px "Noto Sans", sans-serif;
  box-shadow: 1px 0 2px #123a90;
}
.start svg { width: 18px; height: 18px; }
.quick { display: flex; align-items: center; gap: 7px; padding: 0 34px 0 12px; }
.tasks { flex: 1; display: flex; gap: 2px; padding: 3px 0; }
.tasks button {
  flex: 1;
  min-width: 0;
  display: flex;
  align-items: center;
  gap: 3px;
  padding: 0 4px 0 9px;
  border-radius: 3px;
  background: linear-gradient(#5d9bff, #3c81f3 4px, #3a7cf0 20px, #2f6ad8);
}
.tasks .pressed { background: #1e52b7; }
.group-n { color: #ffca6b; font-weight: bold; }
.lang { align-self: center; width: 36px; padding-left: 10px; }
.tray {
  display: flex;
  align-items: center;
  gap: 2px;
  padding-right: 12px;
  background: linear-gradient(#3ab0f4, #149beb 4px, #1290e2 24px, #0c6fc4);
  border-left: 1px solid #0a4fa8;
}
.tray-toggle { margin-left: -10px; }
.tray-toggle svg { width: 18px; height: 18px; }
.ava {
  width: 16px;
  height: 16px;
  border-radius: 50%;
  background: #2b4f7a;
  font: bold 12px "Liberation Sans", sans-serif;
  line-height: 15px;
  text-align: center;
}
.clock { margin-left: 7px; }
```
